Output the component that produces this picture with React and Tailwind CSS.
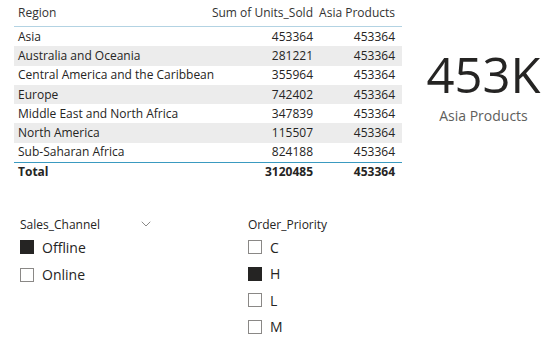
import { ChevronDown } from 'lucide-react';

const rows = [
  ['Asia', '453364', '453364'],
  ['Australia and Oceania', '281221', '453364'],
  ['Central America and the Caribbean', '355964', '453364'],
  ['Europe', '742402', '453364'],
  ['Middle East and North Africa', '347839', '453364'],
  ['North America', '115507', '453364'],
  ['Sub-Saharan Africa', '824188', '453364'],
];

function Box({ checked }) {
  return (
    <span
      className={
        'w-[14px] h-[14px] shrink-0 border ' +
        (checked ? 'bg-[#252423] border-[#252423]' : 'bg-white border-[#8a8886]')
      }
    />
  );
}

function Option({ label, checked }) {
  return (
    <div className="flex items-center gap-[8px] h-[26.5px] text-[14px] text-[#252423]">
      <Box checked={checked} />
      <span>{label}</span>
    </div>
  );
}

export default function App() {
  return (
    <div
      className="w-[555px] h-[343px] bg-white relative overflow-hidden"
      style={{ fontFamily: '"Open Sans", "Noto Sans", sans-serif' }}
    >
      <div className="flex">
        {/* table */}
        <div className="ml-[14px] w-[388px] text-[12px] text-[#252423]">
          <div className="flex h-[27px] items-center border-b border-[#b3d3e3] text-[#333]">
            <div className="w-[196px] pl-[4px]">Region</div>
            <div className="w-[103px] text-right">Sum of Units_Sold</div>
            <div className="w-[89px] text-right pr-[7px]">Asia Products</div>
          </div>
          {rows.map((r, i) => (
            <div
              key={r[0]}
              className={'flex h-[19.3px] items-center ' + (i % 2 === 1 ? 'bg-[#ececec]' : '')}
            >
              <div className="w-[196px] pl-[4px] whitespace-nowrap">{r[0]}</div>
              <div className="w-[103px] text-right">{r[1]}</div>
              <div className="w-[89px] text-right pr-[7px]">{r[2]}</div>
            </div>
          ))}
          <div className="flex h-[19px] items-center border-t border-[#3a9ac0] font-bold">
            <div className="w-[196px] pl-[4px]">Total</div>
            <div className="w-[103px] text-right">3120485</div>
            <div className="w-[89px] text-right pr-[7px]">453364</div>
          </div>
        </div>

        {/* card */}
        <div className="flex-1 flex flex-col items-center pt-[44px] pl-[10px]">
          <div className="text-[49px] leading-[60px] text-[#252423]">453K</div>
          <div className="text-[14px] text-[#605e5c] mt-[1px]">Asia Products</div>
        </div>
      </div>

      {/* slicers */}
      <div className="flex mt-[35px]">
        <div className="ml-[20px] w-[134px]">
          <div className="flex items-center justify-between h-[18px] text-[12px] text-[#252423]">
            <span>Sales_Channel</span>
            <ChevronDown size={16} strokeWidth={1.1} className="text-[#605e5c] -mt-[3px]" />
          </div>
          <div className="flex flex-col gap-[1px]">
            <Option label="Offline" checked />
            <Option label="Online" />
          </div>
        </div>
        <div className="ml-[94px]">
          <div className="h-[18px] flex items-center text-[12px] text-[#252423]">
            Order_Priority
          </div>
          <Option label="C" />
          <Option label="H" checked />
          <Option label="L" />
          <Option label="M" />
        </div>
      </div>
    </div>
  );
}
